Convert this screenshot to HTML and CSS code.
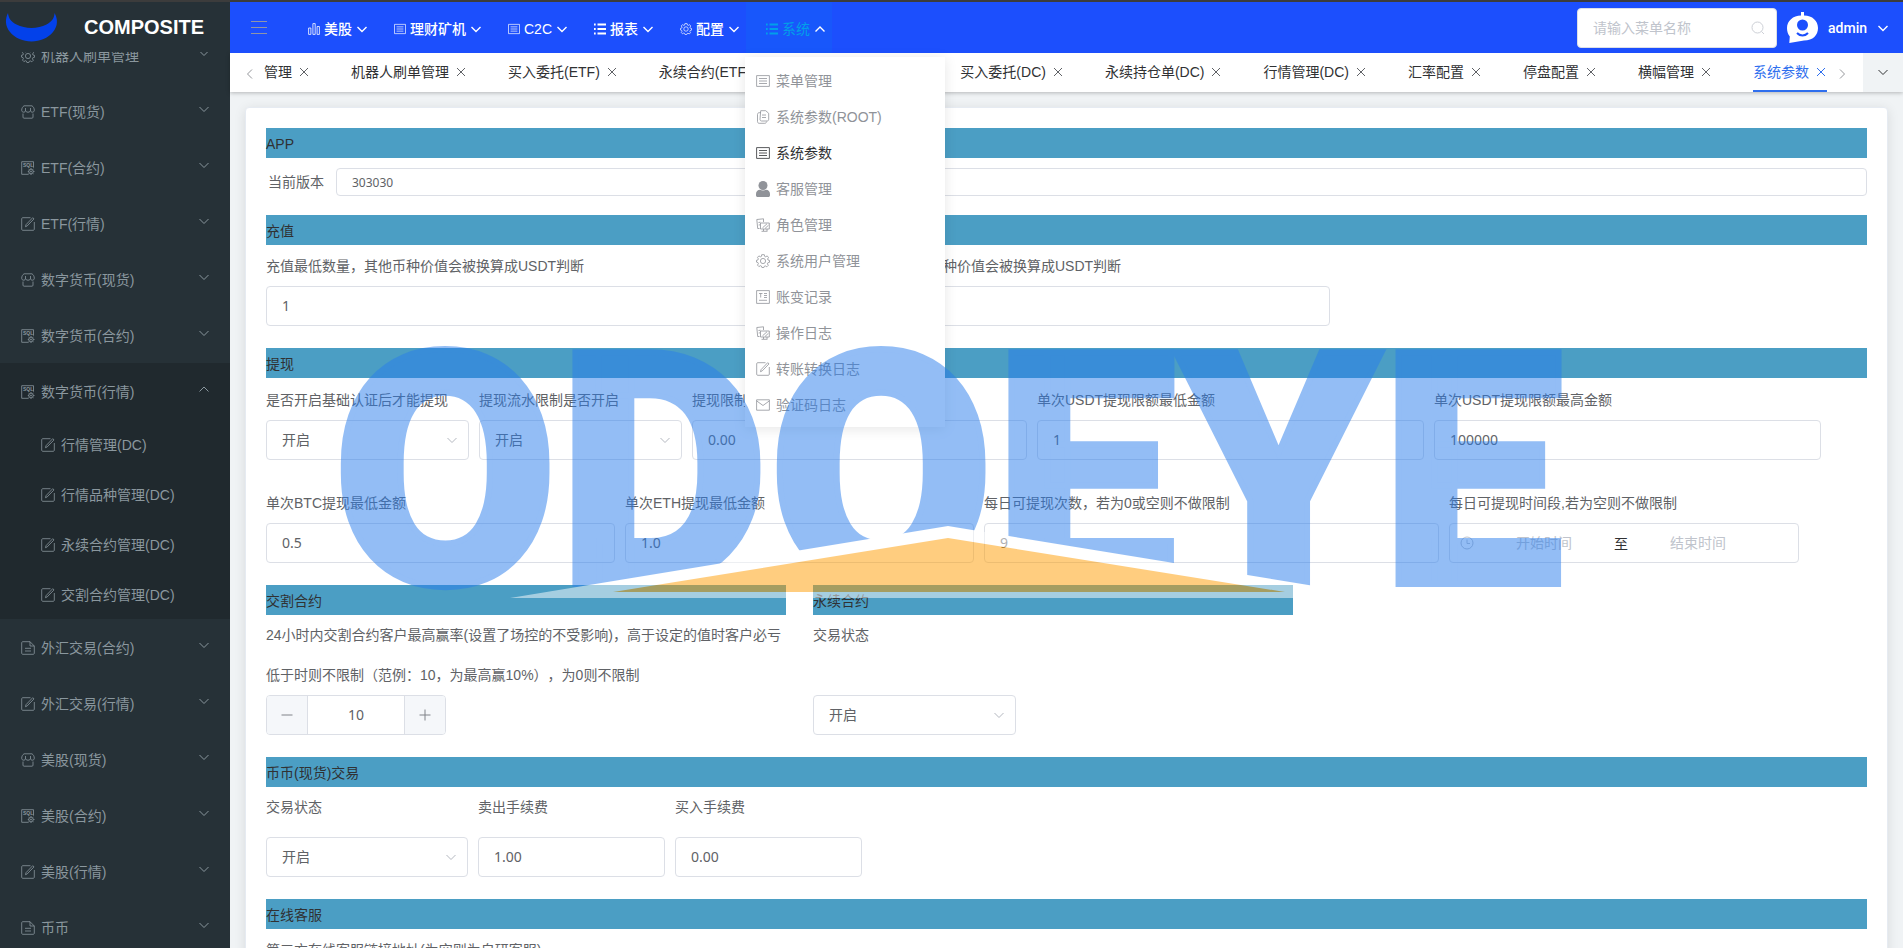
FILE: index.html
```
<!DOCTYPE html>
<html lang="zh-CN">
<head>
<meta charset="utf-8">
<title>系统参数</title>
<link rel="stylesheet" href="styles.css">
</head>
<body>
<svg class="sprite" aria-hidden="true">
  <symbol id="down" viewBox="0 0 12 12"><path d="M1.5 4 6 8.5 10.5 4"/></symbol>
  <symbol id="up" viewBox="0 0 12 12"><path d="M1.5 8.5 6 4l4.500 4.500"/></symbol>
  <symbol id="left" viewBox="0 0 12 12"><path d="M8 1.500 3.500 6 8 10.500"/></symbol>
  <symbol id="right" viewBox="0 0 12 12"><path d="M4 1.500 8.500 6 4 10.500"/></symbol>
  <symbol id="close" viewBox="0 0 12 12"><path d="m2 2 8 8M10 2l-8 8"/></symbol>
  <symbol id="gear" viewBox="0 0 14 14"><circle cx="7" cy="7" r="2.600"/><path d="M5.700.7h2.600l.4 1.700 1 .4 1.500-.9 1.300 1.600-.9 1.500.4 1 1.500.4v1.900l-1.700.5-.4 1 .9 1.500-1.500 1.500-1.500-.9-1 .4-.4 1.200H5.900l-.5-1.400-1-.4-1.500.9-1.400-1.500.9-1.500-.4-1-1.500-.5V6.300L2 5.900l.4-1-.9-1.500 1.400-1.500 1.500.9 1-.4z"/></symbol>
  <symbol id="shop" viewBox="0 0 14 14"><path d="M3 .8h8c1.500 1 2.300 2.600 2.300 4.400 0 1.300-.9 2-1.900 2-1.200 0-1.900-.8-1.900-1.900 0 1.100-1 1.900-2.500 1.900s-2.500-.8-2.500-1.900c0 1.100-.7 1.900-1.900 1.900-1 0-1.900-.7-1.900-2C.7 3.400 1.500 1.800 3 .8zM4.500 3v2.300M9.500 3v2.300M2 8.500v3.700c0 .6.400 1 1 1h8c.6 0 1-.4 1-1V8.500"/></symbol>
  <symbol id="sql" viewBox="0 0 14 14"><path d="M7.500 13.300H.7V.7h11.800v6"/><text x="2" y="5.500" class="sql-text">SQL</text><circle cx="10" cy="10.500" r="2.300"/><circle cx="10" cy="10.500" r=".6"/><path d="M10 7v1M10 13v1M6.800 10.500h1M12.300 10.500h1.200M7.600 8.200l.8.700M11.700 12.100l.8.700M12.400 8.200l-.8.700M8.300 12.100l-.8.700"/></symbol>
  <symbol id="edit" viewBox="0 0 14 14"><path d="M9.500.7H1.700c-.6 0-1 .4-1 1v10.600c0 .6.400 1 1 1h10.600c.6 0 1-.4 1-1V5M4.500 9.700l.5-2L11.700.7l1.300 1.200-6.800 7z"/></symbol>
  <symbol id="doc" viewBox="0 0 14 14"><path d="M9 .7H1.700c-.6 0-1 .4-1 1v10.600c0 .6.400 1 1 1h10.600c.6 0 1-.4 1-1V5zM9 .7V5h4.300M4 7.300h6M4 10h6"/></symbol>
  <symbol id="list" viewBox="0 0 14 12"><path d="M.6.6h12.800v10.800H.6zM3 3.500h8M3 6h8M3 8.500h8"/></symbol>
  <symbol id="copy" viewBox="0 0 14 14"><path d="M5 2.700H3.200c-1 0-1.700.7-1.700 1.700v7.200c0 1 .7 1.700 1.700 1.700h5.600c1 0 1.700-.7 1.700-1.700M4.700.7h5l3 2.600v6c0 1-.6 1.700-1.500 1.700H5.500c-.9 0-1.500-.7-1.500-1.700zM6 5h4M6 7.500h4"/></symbol>
  <symbol id="user" viewBox="0 0 14 16"><circle cx="7" cy="4.500" r="4.500"/><path d="M0 13c0-2.600 1.700-4.300 4-4.300 1.700 1 4.300 1 6 0 2.300 0 4 1.700 4 4.300v1.200c0 1-.7 1.800-1.700 1.800H1.700C.7 16 0 15.200 0 14.200z"/></symbol>
  <symbol id="roles" viewBox="0 0 14 14"><path d="M3.500 10.500H1.700L.8 1.500 7.500.8V4M2.500 4.500l2-.3M2.700 7l1.500-.2M4.500 5h8.800v6H4.500zM6.500 9.800l4.500-4M9 10.500l3.500-3.300M7.500 11v2M11 11v2M5.500 13.300h6"/></symbol>
  <symbol id="tlist" viewBox="0 0 14 14"><path d="M.6.600h12.800v12.800H.6zM3 3.500h3.500M4.700 3.500v4M8 3.500h3M8 5.500h3M8 7.500h3M3 10.300h8"/></symbol>
  <symbol id="mail" viewBox="0 0 14 12"><path d="M.6.800h12.800v10.400H.6zM.8 2 7 6.500 13.200 2"/></symbol>
  <symbol id="bars" viewBox="0 0 12 12"><path d="M.6 5h2.300v6.400H.6zM4.900.6h2.300v10.800H4.900zM9.100 3.500h2.300v7.900H9.100z"/></symbol>
  <symbol id="bullets" viewBox="0 0 12 12"><path d="M3.500 1.500H12M3.500 6H12M3.500 10.500H12M0 1.500h1.700M0 6h1.700M0 10.500h1.700"/></symbol>
  <symbol id="search" viewBox="0 0 14 14"><circle cx="6.500" cy="6.500" r="5.500"/><path d="m10.500 10.500 2.500 2.500"/></symbol>
  <symbol id="clock" viewBox="0 0 14 14"><circle cx="7" cy="7" r="6"/><path d="M7 3.500v4h3"/></symbol>
</svg>

<div class="app">
  <aside class="sidebar">
    <div class="brand">
      <svg class="brand-logo" viewBox="0 0 53 29"><path d="M3 0C0 6 0 13 5 19c5 6 13 9.500 21.500 9.500S43 25 48 19c5-6 5-13 1.500-19 0 5-3 9-8 11.500-9 4.500-21 4.500-30 0C6 9 3.500 5 3 0z"/></svg>
      <strong class="brand-name">COMPOSITE</strong>
    </div>
    <nav class="side-nav">
      <button class="side-item"><svg class="ico"><use href="#gear"/></svg><span>机器人刷单管理</span><svg class="chev"><use href="#down"/></svg></button>
      <button class="side-item"><svg class="ico"><use href="#shop"/></svg><span>ETF(现货)</span><svg class="chev"><use href="#down"/></svg></button>
      <button class="side-item"><svg class="ico"><use href="#sql"/></svg><span>ETF(合约)</span><svg class="chev"><use href="#down"/></svg></button>
      <button class="side-item"><svg class="ico"><use href="#edit"/></svg><span>ETF(行情)</span><svg class="chev"><use href="#down"/></svg></button>
      <button class="side-item"><svg class="ico"><use href="#shop"/></svg><span>数字货币(现货)</span><svg class="chev"><use href="#down"/></svg></button>
      <button class="side-item"><svg class="ico"><use href="#sql"/></svg><span>数字货币(合约)</span><svg class="chev"><use href="#down"/></svg></button>
      <div class="side-open">
        <button class="side-item"><svg class="ico"><use href="#sql"/></svg><span>数字货币(行情)</span><svg class="chev"><use href="#up"/></svg></button>
        <a class="side-sub" href="#"><svg class="ico"><use href="#edit"/></svg><span>行情管理(DC)</span></a>
        <a class="side-sub" href="#"><svg class="ico"><use href="#edit"/></svg><span>行情品种管理(DC)</span></a>
        <a class="side-sub" href="#"><svg class="ico"><use href="#edit"/></svg><span>永续合约管理(DC)</span></a>
        <a class="side-sub" href="#"><svg class="ico"><use href="#edit"/></svg><span>交割合约管理(DC)</span></a>
      </div>
      <button class="side-item"><svg class="ico"><use href="#doc"/></svg><span>外汇交易(合约)</span><svg class="chev"><use href="#down"/></svg></button>
      <button class="side-item"><svg class="ico"><use href="#edit"/></svg><span>外汇交易(行情)</span><svg class="chev"><use href="#down"/></svg></button>
      <button class="side-item"><svg class="ico"><use href="#shop"/></svg><span>美股(现货)</span><svg class="chev"><use href="#down"/></svg></button>
      <button class="side-item"><svg class="ico"><use href="#sql"/></svg><span>美股(合约)</span><svg class="chev"><use href="#down"/></svg></button>
      <button class="side-item"><svg class="ico"><use href="#edit"/></svg><span>美股(行情)</span><svg class="chev"><use href="#down"/></svg></button>
      <button class="side-item"><svg class="ico"><use href="#doc"/></svg><span>币币</span><svg class="chev"><use href="#down"/></svg></button>
    </nav>
  </aside>

  <div class="main">
    <header class="header">
      <button class="burger" aria-label="折叠菜单"><i></i><i></i><i></i></button>
      <nav class="top-nav">
        <button class="top-item"><svg class="ico"><use href="#bars"/></svg><span>美股</span><svg class="chev"><use href="#down"/></svg></button>
        <button class="top-item"><svg class="ico"><use href="#list"/></svg><span>理财矿机</span><svg class="chev"><use href="#down"/></svg></button>
        <button class="top-item"><svg class="ico"><use href="#list"/></svg><span>C2C</span><svg class="chev"><use href="#down"/></svg></button>
        <button class="top-item bold-ico"><svg class="ico"><use href="#bullets"/></svg><span>报表</span><svg class="chev"><use href="#down"/></svg></button>
        <button class="top-item"><svg class="ico"><use href="#gear"/></svg><span>配置</span><svg class="chev"><use href="#down"/></svg></button>
        <div class="top-open">
          <button class="top-item bold-ico active"><svg class="ico"><use href="#bullets"/></svg><span>系统</span><svg class="chev"><use href="#up"/></svg></button>
          <div class="menu">
            <a href="#"><svg class="ico"><use href="#list"/></svg>菜单管理</a>
            <a href="#"><svg class="ico"><use href="#copy"/></svg>系统参数(ROOT)</a>
            <a href="#" class="current"><svg class="ico"><use href="#list"/></svg>系统参数</a>
            <a href="#"><svg class="ico solid"><use href="#user"/></svg>客服管理</a>
            <a href="#"><svg class="ico"><use href="#roles"/></svg>角色管理</a>
            <a href="#"><svg class="ico"><use href="#gear"/></svg>系统用户管理</a>
            <a href="#"><svg class="ico"><use href="#tlist"/></svg>账变记录</a>
            <a href="#"><svg class="ico"><use href="#roles"/></svg>操作日志</a>
            <a href="#"><svg class="ico"><use href="#edit"/></svg>转账转换日志</a>
            <a href="#"><svg class="ico"><use href="#mail"/></svg>验证码日志</a>
          </div>
        </div>
      </nav>
      <label class="search"><input type="text" placeholder="请输入菜单名称" aria-label="请输入菜单名称"><svg class="ico"><use href="#search"/></svg></label>
      <button class="account">
        <svg class="avatar" viewBox="0 0 31 31"><path class="av-body" d="M14 0h3v3.500c8.500 0 14 5.500 14 12.500S26 28.500 17 28.500L2.300 31l.5-6.500C1 22.500 0 19.500 0 16 0 9 6 3.500 14 3.500z"/><circle class="av-eye" cx="15.500" cy="13" r="5.500"/><path class="av-smile" d="M10 21c3 3.300 8 3.300 11 0"/></svg>
        <span>admin</span><svg class="chev"><use href="#down"/></svg>
      </button>
    </header>

    <div class="tabs">
      <button class="tab-arrow" aria-label="向左"><svg class="chev"><use href="#left"/></svg></button>
      <div class="tab-list">
        <div class="tab"><a href="#">用户管理</a><button aria-label="关闭"><svg><use href="#close"/></svg></button></div>
        <div class="tab"><a href="#">机器人刷单管理</a><button aria-label="关闭"><svg><use href="#close"/></svg></button></div>
        <div class="tab"><a href="#">买入委托(ETF)</a><button aria-label="关闭"><svg><use href="#close"/></svg></button></div>
        <div class="tab"><a href="#">永续合约(ETF)</a><button aria-label="关闭"><svg><use href="#close"/></svg></button></div>
        <div class="tab"><a href="#">行情管理(ETF)</a><button aria-label="关闭"><svg><use href="#close"/></svg></button></div>
        <div class="tab"><a href="#">买入委托(DC)</a><button aria-label="关闭"><svg><use href="#close"/></svg></button></div>
        <div class="tab"><a href="#">永续持仓单(DC)</a><button aria-label="关闭"><svg><use href="#close"/></svg></button></div>
        <div class="tab"><a href="#">行情管理(DC)</a><button aria-label="关闭"><svg><use href="#close"/></svg></button></div>
        <div class="tab"><a href="#">汇率配置</a><button aria-label="关闭"><svg><use href="#close"/></svg></button></div>
        <div class="tab"><a href="#">停盘配置</a><button aria-label="关闭"><svg><use href="#close"/></svg></button></div>
        <div class="tab"><a href="#">横幅管理</a><button aria-label="关闭"><svg><use href="#close"/></svg></button></div>
        <div class="tab on"><a href="#">系统参数</a><button aria-label="关闭"><svg><use href="#close"/></svg></button></div>
      </div>
      <button class="tab-arrow next" aria-label="向右"><svg class="chev"><use href="#right"/></svg></button>
      <button class="tab-more" aria-label="更多"><svg class="chev"><use href="#down"/></svg></button>
    </div>

    <main class="content">
      <form class="card">
        <h2 class="band">APP</h2>
        <div class="version"><label for="ver">当前版本</label><input id="ver" class="field small" value="303030"></div>

        <h2 class="band">充值</h2>
        <div class="row deposit">
          <div><label for="d1">充值最低数量，其他币种价值会被换算成USDT判断</label><input id="d1" class="field" value="1"></div>
          <div><label for="d2">充值最低数量，其他币种价值会被换算成USDT判断</label><input id="d2" class="field"></div>
        </div>

        <h2 class="band">提现</h2>
        <div class="row limits">
          <div><label for="w1">是否开启基础认证后才能提现</label><span class="pick"><select id="w1" class="field"><option>开启</option></select><svg><use href="#down"/></svg></span></div>
          <div><label for="w2">提现流水限制是否开启</label><span class="pick"><select id="w2" class="field"><option>开启</option></select><svg><use href="#down"/></svg></span></div>
          <div><label for="w3">提现限制流水比例</label><input id="w3" class="field" value="0.00"></div>
          <div><label for="w4">单次USDT提现限额最低金额</label><input id="w4" class="field" value="1"></div>
          <div><label for="w5">单次USDT提现限额最高金额</label><input id="w5" class="field" value="100000"></div>
        </div>
        <div class="row daily">
          <div><label for="w6">单次BTC提现最低金额</label><input id="w6" class="field" value="0.5"></div>
          <div><label for="w7">单次ETH提现最低金额</label><input id="w7" class="field" value="1.0"></div>
          <div><label for="w8">每日可提现次数，若为0或空则不做限制</label><input id="w8" class="field" value="9"></div>
          <div><label for="w9">每日可提现时间段,若为空则不做限制</label>
            <div class="field range"><svg><use href="#clock"/></svg><input id="w9" placeholder="开始时间"><span>至</span><input placeholder="结束时间" aria-label="结束时间"></div></div>
        </div>

        <div class="pair">
          <section>
            <h2 class="band">交割合约</h2>
            <label class="lines" for="n1">24小时内交割合约客户最高赢率(设置了场控的不受影响)，高于设定的值时客户必亏<br>低于时则不限制（范例：10，为最高赢10%），为0则不限制</label>
            <div class="stepper"><button type="button" aria-label="减少"><svg viewBox="0 0 12 12"><path d="M.5 6h11"/></svg></button><input id="n1" value="10"><button type="button" aria-label="增加"><svg viewBox="0 0 12 12"><path d="M.5 6h11M6 .5v11"/></svg></button></div>
          </section>
          <section>
            <h2 class="band">永续合约</h2>
            <label class="lines" for="n2">交易状态</label>
            <span class="pick"><select id="n2" class="field"><option>开启</option></select><svg><use href="#down"/></svg></span>
          </section>
        </div>

        <h2 class="band">币币(现货)交易</h2>
        <div class="row spot">
          <div><label for="s1">交易状态</label><span class="pick"><select id="s1" class="field"><option>开启</option></select><svg><use href="#down"/></svg></span></div>
          <div><label for="s2">卖出手续费</label><input id="s2" class="field" value="1.00"></div>
          <div><label for="s3">买入手续费</label><input id="s3" class="field" value="0.00"></div>
        </div>

        <h2 class="band">在线客服</h2>
        <div class="row deposit"><div><label for="k1">第三方在线客服链接地址(为空则为自研客服)</label><input id="k1" class="field"></div></div>
      </form>
    </main>
  </div>
</div>

<svg class="watermark" viewBox="0 0 1240 270" aria-hidden="true">
  <g opacity=".5">
    <text class="wm-text" x="610" y="244" text-anchor="middle">ODOEYE</text>
    <path class="wm-roof" d="M172 258 610 186l440 72z"/>
    <path class="wm-gold" d="M275 252 610 198l337 54z"/>
  </g>
</svg>
</body>
</html>
```
FILE: styles.css
```
* { box-sizing: border-box; }

body {
  margin: 0;
  height: 100vh;
  overflow: hidden;
  position: relative;
  font: 14px/20px "Liberation Sans", "Noto Sans CJK SC", sans-serif;
  text-spacing-trim: space-all;
  color: #606266;
  background: #f0f3f5;
}

button { border: 0; padding: 0; background: none; font: inherit; color: inherit; }
a { color: inherit; text-decoration: none; }
svg { fill: none; stroke: currentColor; }
.sprite { position: absolute; width: 0; height: 0; }
.ico { width: 14px; height: 14px; flex: none; stroke-width: .8; }
.chev { width: 12px; height: 12px; flex: none; }
.sql-text { font: bold 5px "Liberation Sans", sans-serif; fill: currentColor; stroke: none; }

.app { display: flex; height: 100vh; border-top: 2px solid #3c3c3c; }

/* sidebar */
.sidebar {
  width: 230px;
  flex: none;
  overflow: hidden;
  background: #263137;
  color: #8a979e;
}
.brand {
  position: relative;
  z-index: 1;
  display: flex;
  align-items: center;
  gap: 26px;
  height: 50px;
  padding-left: 5px;
  background: #263137;
}
.brand-logo { width: 53px; height: 29px; fill: #0341ea; stroke: none; }
.brand-name { font-size: 20px; color: #fff; }
.side-nav { margin-top: -25px; }
.side-item, .side-sub { display: flex; align-items: center; width: 100%; gap: 6px; }
.side-item { height: 56px; padding: 2px 20px 0 21px; text-align: left; }
.side-item span { flex: 1; }
.side-item .chev { margin-bottom: 6px; }
.side-open { background: #20292e; }
.side-sub { height: 50px; padding: 2px 20px 0 41px; }

/* header */
.main { flex: 1; min-width: 0; display: flex; flex-direction: column; }
.header {
  display: flex;
  align-items: center;
  height: 51px;
  flex: none;
  padding: 0 14px 0 21px;
  background: #1c4ffd;
  color: #fff;
}
.burger { display: grid; gap: 5px; width: 16px; margin-right: 21px; }
.burger i { height: 1px; background: #8f95a8; }
.top-nav { display: flex; flex: 1; align-self: stretch; }
.top-item {
  display: flex;
  align-items: center;
  gap: 4px;
  height: 51px;
  padding: 3px 6px 0 20px;
  font-weight: 500;
}
.top-item .ico { width: 12px; height: 12px; }
.top-item.bold-ico .ico { stroke-width: 2; }
.top-item .chev { stroke-width: 1.400; }
.top-open { position: relative; }
.active { background: #1857fb; color: #01a0e9; font-weight: 400; }
.active .chev { color: #fff; }

.menu {
  position: absolute;
  z-index: 5;
  top: 55px;
  left: -1px;
  width: 200px;
  padding: 5px 0;
  background: #fff;
  box-shadow: 0 2px 12px rgba(0, 0, 0, .1);
  color: #909399;
}
.menu a { display: flex; align-items: center; gap: 6px; height: 36px; padding: 2px 0 0 11px; }
.menu .current { color: #303133; }
.solid { fill: currentColor; stroke: none; height: 16px; }

.search {
  display: flex;
  align-items: center;
  width: 200px;
  height: 40px;
  padding: 0 11px 0 15px;
  border: 1px solid #dcdfe6;
  border-radius: 4px;
  background: #fff;
  color: #c0c4cc;
}
.search input { flex: 1; min-width: 0; border: 0; padding: 0; background: none; font: inherit; }
::placeholder { color: #c0c4cc; opacity: 1; }
.account { display: flex; align-items: center; gap: 10px; margin-left: 10px; font-family: Roboto, sans-serif; font-weight: 500; }
.account .chev { stroke-width: 1.400; }
.avatar { width: 31px; height: 31px; stroke: none; }
.av-body { fill: #fff; }
.av-eye { fill: #1c4ffd; }
.av-smile { stroke: #1c4ffd; stroke-width: 2; }

/* tabs */
.tabs {
  position: relative;
  z-index: 1;
  display: flex;
  height: 39px;
  flex: none;
  background: #fff;
  box-shadow: 0 1px 4px rgba(0, 0, 0, .25);
  color: #303133;
}
.header { position: relative; z-index: 2; }
.tab-arrow { width: 34px; color: #95979b; display: flex; align-items: center; padding: 2px 0 0 14px; }
.tab-arrow.next { width: 36px; padding-left: 9px; }
.tab-list { flex: 1; min-width: 0; display: flex; justify-content: flex-end; gap: 41px; overflow: hidden; }
.tab { display: flex; align-items: center; gap: 6px; flex: none; white-space: nowrap; padding-bottom: 2px; }
.tab button { display: flex; color: #606266; }
.tab button svg { width: 12px; height: 12px; }
.on, .on button { color: #2f6fee; }
.on { box-shadow: inset 0 -2px #2f6fee; }
.tab-more { width: 40px; background: #f0f3f5; display: flex; align-items: center; justify-content: center; padding-bottom: 2px; }

/* page */
.content { flex: 1; padding: 15px; overflow: hidden; }
.card {
  min-height: 1000px;
  padding: 20px;
  border: 1px solid #e6ebf2;
  border-radius: 4px;
  background: #fff;
  box-shadow: 0 2px 12px rgba(0, 0, 0, .1);
}
.band {
  margin: 22px 0 0;
  padding-top: 1px;
  height: 30px;
  font-size: 14px;
  line-height: 30px;
  font-weight: 400;
  color: #303133;
  background: #4b9ec4;
}
.card > .band:first-child { margin-top: 0; }
.version + .band { margin-top: 19px; }
.version { display: flex; align-items: center; gap: 12px; padding: 10px 0 0 2px; }
.version .field { flex: 1; }
.field {
  width: 100%;
  height: 40px;
  padding: 0 15px 2px;
  border: 1px solid #dcdfe6;
  border-radius: 4px;
  background: #fff;
  font: 14px "Noto Sans", "Noto Sans CJK SC", sans-serif;
  color: #606266;
}
.field.small { height: 28px; padding-bottom: 0; font-size: 12px; }
select.field { appearance: none; }
.row { display: grid; gap: 10px; }
.row > div { min-width: 0; display: flex; flex-direction: column; }
.row label { line-height: 40px; white-space: nowrap; }
.deposit { grid-template-columns: 1fr 1fr; padding: 1px 537px 0 0; }
.limits { grid-template-columns: 203px 203px 335fr 387fr 387fr; padding: 2px 46px 0 0; }
.daily { grid-template-columns: 349fr 349fr 455fr 350fr; padding: 23px 68px 0 0; }
.spot { grid-template-columns: 202px 187px 187px; }
.spot > div { gap: 10px; }
.pick { display: block; position: relative; }
.pick svg { position: absolute; right: 11px; top: 14px; width: 12px; height: 12px; color: #b4b8c0; pointer-events: none; }
.range { display: flex; align-items: center; padding: 0 10px; font-family: "Liberation Sans", "Noto Sans CJK SC", sans-serif; }
.range svg { width: 14px; height: 14px; flex: none; color: #c0c4cc; }
.range input { flex: 7; min-width: 0; border: 0; padding: 0; background: none; text-align: center; font: inherit; }
.range span { color: #303133; }
.range::after { content: ""; flex: 1; }

.pair { display: grid; grid-template-columns: 520px 480px; gap: 27px; }
.pair .pick { width: 203px; }
.lines { display: block; height: 80px; line-height: 40px; white-space: nowrap; }
.stepper { display: flex; width: 180px; height: 40px; border: 1px solid #dcdfe6; border-radius: 4px; overflow: hidden; }
.stepper button { width: 40px; background: #f5f7fa; color: #808389; display: flex; align-items: center; justify-content: center; }
.stepper svg { width: 12px; height: 12px; }
.stepper input { flex: 1; min-width: 0; border: solid #dcdfe6; border-width: 0 1px; padding: 0 0 2px; text-align: center; font: 14px "Noto Sans", sans-serif; color: #606266; }

/* overlay */
.watermark { position: absolute; z-index: 10; left: 338px; top: 340px; width: 1240px; height: 270px; pointer-events: none; overflow: visible; }
.wm-text { font: 900 326px Roboto, sans-serif; fill: #297ded; stroke: #297ded; stroke-width: 6px; }
.wm-roof { fill: #fff; stroke: none; }
.wm-gold { fill: #ff9d01; stroke: none; }
```
